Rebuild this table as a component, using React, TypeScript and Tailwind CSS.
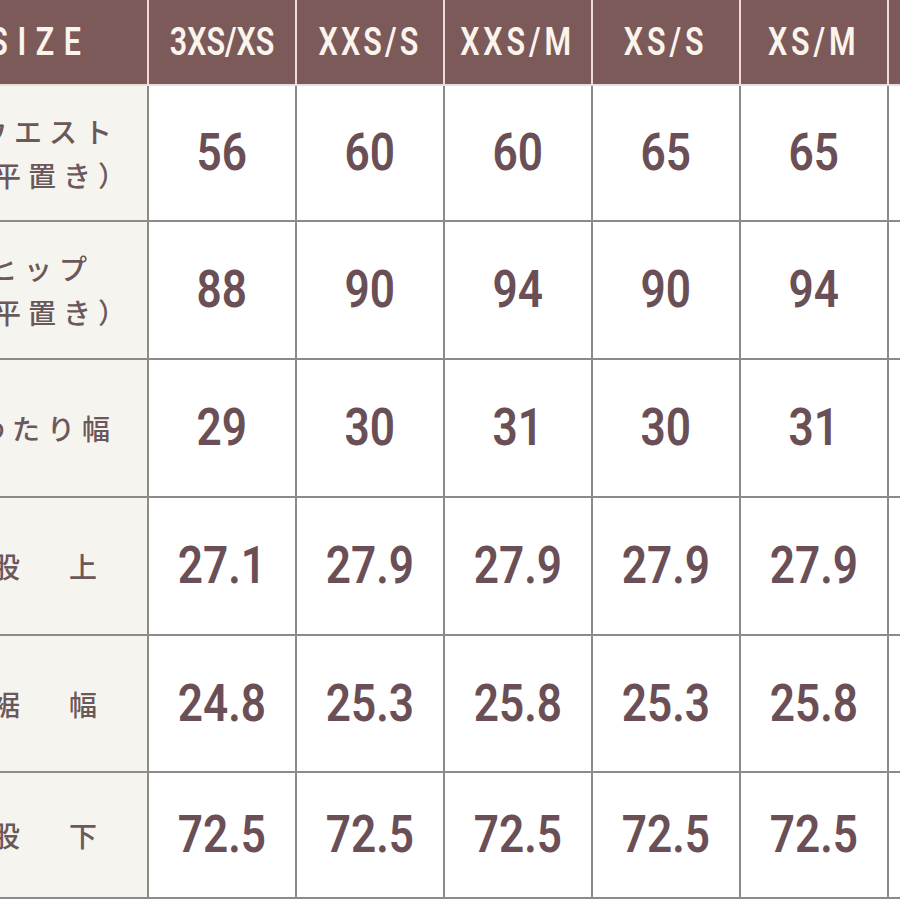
export default function App() {
  const headers = ["3XS/XS", "XXS/S", "XXS/M", "XS/S", "XS/M", ""];
  const rows: { label: React.ReactNode; values: string[] }[] = [
    {
      label: (
        <div className="flex flex-col items-end leading-[44px] tracking-[7px]">
          <span className="pr-[28px]">ウエスト</span>
          <span className="pr-[14px]">（平置き）</span>
        </div>
      ),
      values: ["56", "60", "60", "65", "65", ""],
    },
    {
      label: (
        <div className="flex flex-col items-end leading-[44px] tracking-[7px]">
          <span className="pr-[53px]">ヒップ</span>
          <span className="pr-[14px]">（平置き）</span>
        </div>
      ),
      values: ["88", "90", "94", "90", "94", ""],
    },
    {
      label: <span className="pr-[30px] tracking-[7px]">わたり幅</span>,
      values: ["29", "30", "31", "30", "31", ""],
    },
    {
      label: (
        <span className="flex gap-[49px] pr-[50px]">
          <span>股</span>
          <span>上</span>
        </span>
      ),
      values: ["27.1", "27.9", "27.9", "27.9", "27.9", ""],
    },
    {
      label: (
        <span className="flex gap-[49px] pr-[50px]">
          <span>裾</span>
          <span>幅</span>
        </span>
      ),
      values: ["24.8", "25.3", "25.8", "25.3", "25.8", ""],
    },
    {
      label: (
        <span className="flex gap-[49px] pr-[50px]">
          <span>股</span>
          <span>下</span>
        </span>
      ),
      values: ["72.5", "72.5", "72.5", "72.5", "72.5", ""],
    },
  ];

  const rowHeights = ["h-[136px]", "h-[138px]", "h-[138px]", "h-[138px]", "h-[137px]", "h-[126px]"];

  return (
    <div className="w-[900px] h-[900px] overflow-hidden bg-white">
      {/* Header */}
      <div className="flex h-[86px] w-[1100px] bg-[#7d5a5a] border-b-2 border-[#e6dfdb] font-['Roboto',sans-serif] text-[#fbf4ec] font-semibold">
        <div className="w-[149px] shrink-0 flex items-center justify-end pr-[56px] border-r-2 border-[#f1dcd5] text-[38px]">
          <span className="inline-block origin-right scale-x-[0.8] tracking-[12px]">SIZE</span>
        </div>
        {headers.map((h, i) => (
          <div
            key={i}
            className="w-[148px] shrink-0 flex items-center justify-center border-r-2 border-[#f1dcd5] text-[39px]"
          >
            <span
              className={`inline-block scale-x-[0.78] ${
                i === 0 ? "tracking-[0px]" : i === 1 ? "tracking-[4px]" : "tracking-[5px]"
              }`}
            >
              {h}
            </span>
          </div>
        ))}
      </div>

      {/* Body */}
      {rows.map((r, ri) => (
        <div key={ri} className={`flex w-[1100px] border-b-2 border-[#8e8a8a] ${rowHeights[ri]}`}>
          <div className="w-[149px] shrink-0 overflow-hidden flex items-center justify-end bg-[#f6f4ef] border-r-2 border-[#8e8a8a] text-[#6a585b] text-[28px] font-medium font-['Noto_Sans_CJK_JP',sans-serif] whitespace-nowrap">
            {r.label}
          </div>
          {r.values.map((v, vi) => (
            <div
              key={vi}
              className="w-[148px] shrink-0 flex items-center justify-center border-r-2 border-[#8e8a8a] text-[#6b4f56] text-[52px] font-semibold font-['Roboto',sans-serif]"
            >
              <span className="inline-block scale-x-[0.85]">{v}</span>
            </div>
          ))}
        </div>
      ))}
    </div>
  );
}
